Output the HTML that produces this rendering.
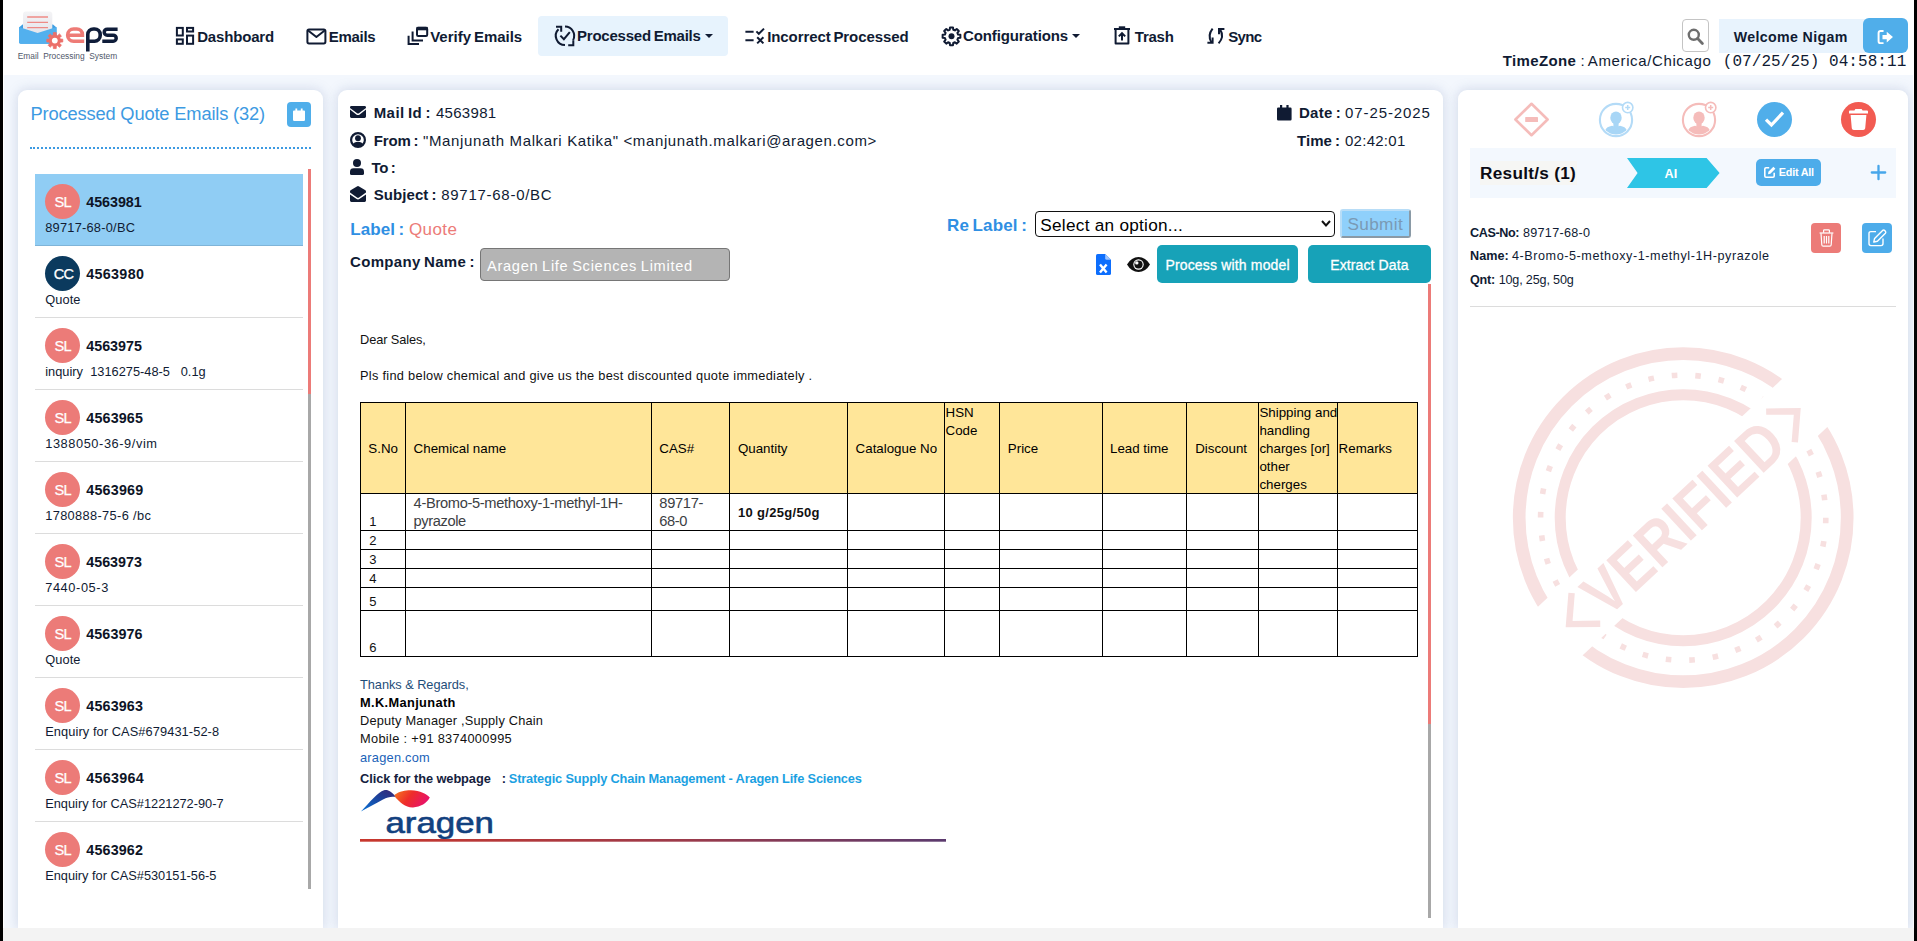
<!DOCTYPE html>
<html lang="en">
<head>
<meta charset="utf-8">
<title>EPS - Email Processing System</title>
<style>
*{box-sizing:border-box}
html,body{margin:0;padding:0}
body{width:1917px;height:941px;overflow:hidden;position:relative;background:#fff;font-family:"Liberation Sans",sans-serif;color:#101b33}
.t{position:absolute;white-space:pre;line-height:1;color:#101b33;font-family:"Liberation Sans",sans-serif}
.abs{position:absolute}
.edgeL{left:0;top:0;width:3px;height:941px;background:#000}
.edgeR{left:1914px;top:0;width:3px;height:941px;background:#000}
.bg{left:4px;top:75px;width:1909px;height:853px;background:#f3f7fd}
.foot{left:3px;top:928px;width:1911px;height:13px;background:#f3f3f3;z-index:5}
.card{background:#fff;border-radius:9px 9px 0 0;box-shadow:0 0 11px 1px rgba(125,145,185,.27)}
svg{position:absolute;overflow:visible}
</style>
</head>
<body>
<div class="abs edgeL"></div>
<div class="abs edgeR"></div>
<div class="abs bg"></div>
<div class="abs foot"></div>

<header>
<div class="abs" style="left:4px;top:0;width:1909px;height:75px;background:#fff"></div>
<svg style="left:0px;top:0px" width="130" height="75" viewBox="0 0 130 75" >
<defs><linearGradient id="lgp" x1="0" y1="0" x2="0" y2="1"><stop offset="0" stop-color="#f4f4f6"/><stop offset="1" stop-color="#e4e4ea"/></linearGradient></defs>
<path d="M19 27.5 L22.5 24.5 H53 L56.5 27.5 V42 Q56.5 43.8 54.7 43.8 H20.8 Q19 43.8 19 42 Z" fill="#3f9fe3"/>
<rect x="23" y="11.5" width="29.3" height="23" rx="3" fill="url(#lgp)"/>
<path d="M27.2 17 H48 M27.2 22.3 H48 M27.2 27.6 H48" stroke="#ee8a86" stroke-width="1.3"/>
<path d="M19 27 L37.6 33 L56.5 27 V42 Q56.5 43.8 54.7 43.8 H20.8 Q19 43.8 19 42 Z" fill="#52b0ee"/>
<g transform="translate(54.8 40.6)"><path d="M-1.48 -5.51 L-1.41 -7.98 L1.41 -7.98 L1.48 -5.51 L2.85 -4.94 L4.65 -6.64 L6.64 -4.65 L4.94 -2.85 L5.51 -1.48 L7.98 -1.41 L7.98 1.41 L5.51 1.48 L4.94 2.85 L6.64 4.65 L4.65 6.64 L2.85 4.94 L1.48 5.51 L1.41 7.98 L-1.41 7.98 L-1.48 5.51 L-2.85 4.94 L-4.65 6.64 L-6.64 4.65 L-4.94 2.85 L-5.51 1.48 L-7.98 1.41 L-7.98 -1.41 L-5.51 -1.48 L-4.94 -2.85 L-6.64 -4.65 L-4.65 -6.64 L-2.85 -4.94 Z" fill="#ec6f69" stroke="#ec6f69" stroke-width=".8" stroke-linejoin="round"/><circle r="2.9" fill="#fff"/></g>
<path d="M68.3 35.3 H82.4 V34.6 A5.6 5.6 0 0 0 76.8 29 H73.6 A5.9 5.9 0 0 0 67.7 34.9 V35.4 A5.9 5.9 0 0 0 73.6 41.2 H84.2" fill="none" stroke="#ee7b76" stroke-width="3.6"/>
<path d="M87.8 51.4 V34.6 A5.6 5.6 0 0 1 93.4 29 H94.6 A5.6 5.6 0 0 1 100.2 34.6 V35.6 A5.6 5.6 0 0 1 94.6 41.2 H87.8" fill="none" stroke="#0f1d3a" stroke-width="3.6"/>
<path d="M117.6 29.2 H107.2 A3 3 0 0 0 107.2 35.2 H113.2 A3 3 0 0 1 113.2 41.2 H102.3" fill="none" stroke="#0f1d3a" stroke-width="3.5"/>
</svg>
<span class="t" style="left:17.7px;top:52.0px;font-size:8.4px;color:#50586a;letter-spacing:-0.004px;">Email  Processing  System</span>
<nav>
<div class="abs" style="left:538px;top:16px;width:190px;height:39.5px;border-radius:4px;background:#e7f3fd"></div>
<svg style="left:176px;top:27px" width="18" height="18" viewBox="0 0 18 18" ><g fill="none" stroke="#101b33" stroke-width="2"><rect x=".9" y=".9" width="5.9" height="7.6"/><rect x="11" y=".9" width="6.1" height="3.6"/><rect x=".9" y="12.4" width="5.9" height="4.4"/><rect x="11" y="8.6" width="6.1" height="8.2"/></g></svg>
<svg style="left:306px;top:27.5px" width="21" height="17" viewBox="0 0 21 17" ><g fill="none" stroke="#101b33" stroke-width="2" stroke-linejoin="round"><rect x="1.4" y="1.4" width="18" height="14" rx="1.6"/><path d="M1.8 2.2 L10.4 9 L19 2.2"/></g></svg>
<svg style="left:407px;top:26px" width="22" height="19" viewBox="0 0 22 19" ><g fill="none" stroke="#101b33" stroke-width="2"><rect x="10" y="1.8" width="10.2" height="8.2" rx="1.2"/><path d="M9.6 2.6 H20.6" stroke-width="3.4"/><path d="M5.6 5.6 V14.4 H16"/><path d="M1.6 9.8 V18 H12"/></g></svg>
<svg style="left:554px;top:25px" width="22" height="22" viewBox="0 0 22 22" ><g fill="none" stroke="#101b33" stroke-width="2" stroke-linejoin="miter"><path d="M11 20 A9.2 9.2 0 0 1 4.5 4.3"/><path d="M2 1.7 H7.2 V6.8"/><path d="M11 1.6 A9.2 9.2 0 0 1 19.1 15.1"/><path d="M19.3 15.2 V20.2 H14.2"/><path d="M6.4 10.6 L9.9 14.2 L15.8 7.2"/></g></svg>
<svg style="left:745px;top:27px" width="21" height="18" viewBox="0 0 21 18" ><g fill="none" stroke="#101b33" stroke-width="2"><path d="M.4 4.8 H8.6 M.4 13.2 H8.6"/><path d="M11.4 4.4 L13.8 6.8 L19 1.6"/><path d="M12.2 10.2 L18.4 16.4 M18.4 10.2 L12.2 16.4"/></g></svg>
<svg style="left:940.5px;top:25.5px" width="21" height="21" viewBox="0 0 21 21" ><g transform="translate(10.5 10.3)"><path d="M-1.76 -6.57 L-1.49 -8.88 L1.49 -8.88 L1.76 -6.57 L3.40 -5.89 L5.23 -7.33 L7.33 -5.23 L5.89 -3.40 L6.57 -1.76 L8.88 -1.49 L8.88 1.49 L6.57 1.76 L5.89 3.40 L7.33 5.23 L5.23 7.33 L3.40 5.89 L1.76 6.57 L1.49 8.88 L-1.49 8.88 L-1.76 6.57 L-3.40 5.89 L-5.23 7.33 L-7.33 5.23 L-5.89 3.40 L-6.57 1.76 L-8.88 1.49 L-8.88 -1.49 L-6.57 -1.76 L-5.89 -3.40 L-7.33 -5.23 L-5.23 -7.33 L-3.40 -5.89 Z" fill="none" stroke="#101b33" stroke-width="2" stroke-linejoin="round" stroke-width="1.7"/><circle r="3" fill="#101b33"/></g></svg>
<svg style="left:1113px;top:26px" width="18" height="20" viewBox="0 0 18 20" ><g fill="none" stroke="#101b33" stroke-width="2"><path d="M1 3 H17"/><path d="M5.8 1.4 H12.2" stroke-width="2.2"/><path d="M2.6 3 V17.6 H15.4 V3" stroke-linejoin="round"/><path d="M9 14.6 V7.4 M5.8 10.4 L9 7.2 L12.2 10.4"/></g></svg>
<svg style="left:1206px;top:27px" width="20" height="18" viewBox="0 0 20 18" ><g fill="none" stroke="#101b33" stroke-width="2" stroke-width="2"><path d="M6.6 1.6 Q1.2 8.4 5.4 15.2"/><path d="M1.4 15.8 H6.6 V10.6"/><path d="M12.6 16.4 Q18.6 9.6 14.2 2.6"/><path d="M18.4 2 H13 V7.2"/></g></svg>
<svg style="left:704.6px;top:34px" width="8" height="4" viewBox="0 0 8 4" ><path d="M0 0 H8 L4 4 Z" fill="#101b33"/></svg>
<svg style="left:1072.3px;top:34px" width="8" height="4" viewBox="0 0 8 4" ><path d="M0 0 H8 L4 4 Z" fill="#101b33"/></svg>
<a class="t" style="left:197.2px;top:29.0px;font-size:15px;font-weight:700;word-spacing:-1.2px;letter-spacing:-0.173px;">Dashboard</a>
<a class="t" style="left:328.8px;top:29.0px;font-size:15px;font-weight:700;word-spacing:-1.2px;letter-spacing:-0.296px;">Emails</a>
<a class="t" style="left:430.2px;top:29.0px;font-size:15px;font-weight:700;word-spacing:-1.2px;letter-spacing:-0.016px;">Verify Emails</a>
<a class="t" style="left:577.0px;top:28.0px;font-size:15px;font-weight:700;word-spacing:-1.2px;letter-spacing:-0.220px;">Processed Emails</a>
<a class="t" style="left:767.2px;top:29.0px;font-size:15px;font-weight:700;word-spacing:-1.2px;letter-spacing:-0.092px;">Incorrect Processed</a>
<a class="t" style="left:963.0px;top:28.0px;font-size:15px;font-weight:700;word-spacing:-1.2px;letter-spacing:-0.118px;">Configurations</a>
<a class="t" style="left:1134.8px;top:29.0px;font-size:15px;font-weight:700;word-spacing:-1.2px;letter-spacing:-0.246px;">Trash</a>
<a class="t" style="left:1228.3px;top:29.0px;font-size:15px;font-weight:700;word-spacing:-1.2px;letter-spacing:-0.715px;">Sync</a>
</nav>
<div class="abs" style="left:1682px;top:19px;width:27px;height:33px;border:1px solid #c4c4c4;border-radius:4px;background:#fff"></div>
<svg style="left:1687px;top:28px" width="17" height="17" viewBox="0 0 17 17" ><circle cx="6.8" cy="6.8" r="5" fill="none" stroke="#6e6e6e" stroke-width="2.4"/><path d="M10.6 10.6 L15.4 15.4" stroke="#6e6e6e" stroke-width="2.8" stroke-linecap="round"/></svg>
<div class="abs" style="left:1719px;top:19px;width:150px;height:34px;background:#e8f3fd"></div>
<div class="abs" style="left:1863px;top:18px;width:45px;height:35px;border-radius:6px;background:#50aeea"></div>
<svg style="left:1877px;top:30px" width="17" height="14.2" viewBox="0 0 18 16" ><path d="M6 1.2 H3.4 Q1.2 1.2 1.2 3.4 V12.6 Q1.2 14.8 3.4 14.8 H6" fill="none" stroke="#fff" stroke-width="2.2" stroke-linecap="round"/><path d="M5.6 5.6 H10.4 V2 L17.4 8 L10.4 14 V10.4 H5.6 Z" fill="#fff"/></svg>
<span class="t" style="left:1733.7px;top:30.0px;font-size:14.2px;font-weight:700;letter-spacing:0.358px;">Welcome Nigam</span>
<span class="t" style="left:1502.8px;top:53.0px;font-size:15px;font-weight:700;letter-spacing:0.353px;">TimeZone</span>
<span class="t" style="left:1580.6px;top:53.0px;font-size:15px;">:</span><span class="t" style="left:1587.8px;top:53.0px;font-size:15px;letter-spacing:0.625px;">America/Chicago</span>
<span class="t" style="left:1722.8px;top:54.0px;font-size:16px;font-family:'Liberation Mono', monospace;letter-spacing:0.056px;">(07/25/25) 04:58:11</span>
</header>

<aside>
<div class="abs card" style="left:18px;top:90px;width:305px;height:838px"></div>
<h2 class="t" style="left:30.5px;top:105.0px;font-size:18.3px;color:#3d9ae2;letter-spacing:-0.159px;margin:0;font-weight:400;">Processed Quote Emails (32)</h2>
<div class="abs" style="left:287px;top:102px;width:24px;height:25px;border-radius:4px;background:#4faeea"></div>
<svg style="left:293px;top:108px" width="12" height="13" viewBox="0 0 12 13" ><path d="M1 2.6 H11 Q12 2.6 12 3.6 V11.8 Q12 13 10.8 13 H1.2 Q0 13 0 11.8 V3.6 Q0 2.6 1 2.6 Z M2.4 .4 H4.2 V2.8 H2.4 Z M7.8 .4 H9.6 V2.8 H7.8 Z" fill="#fff"/></svg>
<div class="abs" style="left:30px;top:147px;width:281px;height:0;border-top:2.4px dotted #3d9ae2"></div>
<div class="abs" style="left:308px;top:169px;width:3px;height:225px;background:#ec7b78"></div>
<div class="abs" style="left:308px;top:394px;width:3px;height:495px;background:#a8a8a8"></div>
<ul style="list-style:none;margin:0;padding:0">
<li><div class="abs" style="left:35px;top:174px;width:268px;height:72px;background:#90cdf4;border-bottom:1px solid #7fb4d8"></div>
<div class="abs" style="left:45px;top:184px;width:35px;height:35px;border-radius:50%;background:#ec7b78"></div>
<span class="t" style="left:54.4px;top:195.0px;font-size:14.6px;color:#fff;letter-spacing:-0.580px;-webkit-text-stroke:.25px #fff;">SL</span><span class="t" style="left:86.3px;top:195.0px;font-size:14.3px;font-weight:700;color:#0d1426;letter-spacing:-0.039px;">4563981</span><span class="t" style="left:45.2px;top:222.0px;font-size:12.8px;letter-spacing:0.246px;">89717-68-0/BC</span></li>
<li><div class="abs" style="left:35px;top:246px;width:268px;height:72px;background:transparent;border-bottom:1px solid #dcdcdc"></div>
<div class="abs" style="left:45px;top:256px;width:35px;height:35px;border-radius:50%;background:#0b3a5e"></div>
<span class="t" style="left:53.7px;top:267.0px;font-size:14.6px;color:#fff;letter-spacing:-0.847px;-webkit-text-stroke:.25px #fff;">CC</span><span class="t" style="left:86.3px;top:267.0px;font-size:14.3px;font-weight:700;color:#0d1426;letter-spacing:0.318px;">4563980</span><span class="t" style="left:45.2px;top:294.0px;font-size:12.8px;letter-spacing:0.085px;">Quote</span></li>
<li><div class="abs" style="left:35px;top:318px;width:268px;height:72px;background:transparent;border-bottom:1px solid #dcdcdc"></div>
<div class="abs" style="left:45px;top:328px;width:35px;height:35px;border-radius:50%;background:#ec7b78"></div>
<span class="t" style="left:54.4px;top:339.0px;font-size:14.6px;color:#fff;letter-spacing:-0.580px;-webkit-text-stroke:.25px #fff;">SL</span><span class="t" style="left:86.3px;top:339.0px;font-size:14.3px;font-weight:700;color:#0d1426;letter-spacing:-0.010px;">4563975</span><span class="t" style="left:45.2px;top:366.0px;font-size:12.8px;letter-spacing:0.015px;">inquiry  1316275-48-5   0.1g</span></li>
<li><div class="abs" style="left:35px;top:390px;width:268px;height:72px;background:transparent;border-bottom:1px solid #dcdcdc"></div>
<div class="abs" style="left:45px;top:400px;width:35px;height:35px;border-radius:50%;background:#ec7b78"></div>
<span class="t" style="left:54.4px;top:411.0px;font-size:14.6px;color:#fff;letter-spacing:-0.580px;-webkit-text-stroke:.25px #fff;">SL</span><span class="t" style="left:86.3px;top:411.0px;font-size:14.3px;font-weight:700;color:#0d1426;letter-spacing:0.161px;">4563965</span><span class="t" style="left:45.2px;top:438.0px;font-size:12.8px;letter-spacing:0.578px;">1388050-36-9/vim</span></li>
<li><div class="abs" style="left:35px;top:462px;width:268px;height:72px;background:transparent;border-bottom:1px solid #dcdcdc"></div>
<div class="abs" style="left:45px;top:472px;width:35px;height:35px;border-radius:50%;background:#ec7b78"></div>
<span class="t" style="left:54.4px;top:483.0px;font-size:14.6px;color:#fff;letter-spacing:-0.580px;-webkit-text-stroke:.25px #fff;">SL</span><span class="t" style="left:86.3px;top:483.0px;font-size:14.3px;font-weight:700;color:#0d1426;letter-spacing:0.204px;">4563969</span><span class="t" style="left:45.2px;top:510.0px;font-size:12.8px;letter-spacing:0.354px;">1780888-75-6 /bc</span></li>
<li><div class="abs" style="left:35px;top:534px;width:268px;height:72px;background:transparent;border-bottom:1px solid #dcdcdc"></div>
<div class="abs" style="left:45px;top:544px;width:35px;height:35px;border-radius:50%;background:#ec7b78"></div>
<span class="t" style="left:54.4px;top:555.0px;font-size:14.6px;color:#fff;letter-spacing:-0.580px;-webkit-text-stroke:.25px #fff;">SL</span><span class="t" style="left:86.3px;top:555.0px;font-size:14.3px;font-weight:700;color:#0d1426;letter-spacing:-0.010px;">4563973</span><span class="t" style="left:45.2px;top:582.0px;font-size:12.8px;letter-spacing:0.595px;">7440-05-3</span></li>
<li><div class="abs" style="left:35px;top:606px;width:268px;height:72px;background:transparent;border-bottom:1px solid #dcdcdc"></div>
<div class="abs" style="left:45px;top:616px;width:35px;height:35px;border-radius:50%;background:#ec7b78"></div>
<span class="t" style="left:54.4px;top:627.0px;font-size:14.6px;color:#fff;letter-spacing:-0.580px;-webkit-text-stroke:.25px #fff;">SL</span><span class="t" style="left:86.3px;top:627.0px;font-size:14.3px;font-weight:700;color:#0d1426;letter-spacing:0.075px;">4563976</span><span class="t" style="left:45.2px;top:654.0px;font-size:12.8px;letter-spacing:0.085px;">Quote</span></li>
<li><div class="abs" style="left:35px;top:678px;width:268px;height:72px;background:transparent;border-bottom:1px solid #dcdcdc"></div>
<div class="abs" style="left:45px;top:688px;width:35px;height:35px;border-radius:50%;background:#ec7b78"></div>
<span class="t" style="left:54.4px;top:699.0px;font-size:14.6px;color:#fff;letter-spacing:-0.580px;-webkit-text-stroke:.25px #fff;">SL</span><span class="t" style="left:86.3px;top:699.0px;font-size:14.3px;font-weight:700;color:#0d1426;letter-spacing:0.161px;">4563963</span><span class="t" style="left:45.2px;top:726.0px;font-size:12.8px;letter-spacing:0.094px;">Enquiry for CAS#679431-52-8</span></li>
<li><div class="abs" style="left:35px;top:750px;width:268px;height:72px;background:transparent;border-bottom:1px solid #dcdcdc"></div>
<div class="abs" style="left:45px;top:760px;width:35px;height:35px;border-radius:50%;background:#ec7b78"></div>
<span class="t" style="left:54.4px;top:771.0px;font-size:14.6px;color:#fff;letter-spacing:-0.580px;-webkit-text-stroke:.25px #fff;">SL</span><span class="t" style="left:86.3px;top:771.0px;font-size:14.3px;font-weight:700;color:#0d1426;letter-spacing:0.275px;">4563964</span><span class="t" style="left:45.2px;top:798.0px;font-size:12.8px;letter-spacing:-0.006px;">Enquiry for CAS#1221272-90-7</span></li>
<li><div class="abs" style="left:35px;top:822px;width:268px;height:72px;background:transparent;border-bottom:1px solid transparent"></div>
<div class="abs" style="left:45px;top:832px;width:35px;height:35px;border-radius:50%;background:#ec7b78"></div>
<span class="t" style="left:54.4px;top:843.0px;font-size:14.6px;color:#fff;letter-spacing:-0.580px;-webkit-text-stroke:.25px #fff;">SL</span><span class="t" style="left:86.3px;top:843.0px;font-size:14.3px;font-weight:700;color:#0d1426;letter-spacing:0.161px;">4563962</span><span class="t" style="left:45.2px;top:870.0px;font-size:12.8px;letter-spacing:-0.009px;">Enquiry for CAS#530151-56-5</span></li>
</ul>
</aside>

<main>
<div class="abs card" style="left:338px;top:90px;width:1105px;height:838px"></div>
<svg style="left:350px;top:106px" width="16" height="12" viewBox="0 0 16 12" ><path d="M1.4 0 H14.6 Q16 0 16 1.4 V1.9 L8.9 7.3 Q8 7.9 7.1 7.3 L0 1.9 V1.4 Q0 0 1.4 0 Z M0 3.6 L6.3 8.4 Q8 9.6 9.7 8.4 L16 3.6 V10.6 Q16 12 14.6 12 H1.4 Q0 12 0 10.6 Z" fill="#101b33"/></svg>
<svg style="left:350px;top:132px" width="16" height="16" viewBox="0 0 16 16" ><circle cx="8" cy="8" r="6.9" fill="none" stroke="#101b33" stroke-width="2.2"/><circle cx="8" cy="6.2" r="2.9" fill="#101b33"/><path d="M2.6 12.8 Q4 9.7 8 9.7 Q12 9.7 13.4 12.8 Q11 15 8 15 Q5 15 2.6 12.8 Z" fill="#101b33"/></svg>
<svg style="left:350px;top:159px" width="14" height="16" viewBox="0 0 14 16" ><circle cx="7" cy="4" r="4" fill="#101b33"/><path d="M0 14.4 V12.6 Q0 9.2 3.6 9.2 H10.4 Q14 9.2 14 12.6 V14.4 Q14 16 12.4 16 H1.6 Q0 16 0 14.4 Z" fill="#101b33"/></svg>
<svg style="left:350px;top:186px" width="16" height="16" viewBox="0 0 16 16" ><path d="M0 5.6 Q0 4.8 .6 4.3 L6.9 .4 Q8 -.3 9.1 .4 L15.4 4.3 Q16 4.8 16 5.6 V6.6 L9 11.6 Q8 12.3 7 11.6 L0 6.6 Z M0 8.4 L6.3 12.8 Q8 14 9.7 12.8 L16 8.4 V14.6 Q16 16 14.6 16 H1.4 Q0 16 0 14.6 Z" fill="#101b33"/></svg>
<span class="t" style="left:373.7px;top:105.0px;font-size:15px;font-weight:700;word-spacing:-1.2px;letter-spacing:0.429px;">Mail Id :</span><span class="t" style="left:435.9px;top:105.0px;font-size:15px;letter-spacing:0.313px;">4563981</span>
<span class="t" style="left:373.7px;top:133.0px;font-size:15px;font-weight:700;word-spacing:-1.2px;letter-spacing:-0.145px;">From :</span><span class="t" style="left:423.0px;top:133.0px;font-size:15px;letter-spacing:0.636px;">&quot;Manjunath Malkari Katika&quot; &lt;manjunath.malkari@aragen.com&gt;</span>
<span class="t" style="left:371.6px;top:160.0px;font-size:15px;font-weight:700;word-spacing:-1.2px;letter-spacing:-0.347px;">To :</span>
<span class="t" style="left:373.7px;top:187.0px;font-size:15px;font-weight:700;word-spacing:-1.2px;letter-spacing:0.073px;">Subject :</span><span class="t" style="left:441.2px;top:187.0px;font-size:15px;letter-spacing:0.728px;">89717-68-0/BC</span>
<span class="t" style="left:350.2px;top:221.0px;font-size:17px;font-weight:700;color:#2f8fe3;word-spacing:-1.4px;letter-spacing:0.101px;">Label :</span><span class="t" style="left:409.0px;top:221.0px;font-size:17px;color:#ec7b78;letter-spacing:0.397px;">Quote</span>
<span class="t" style="left:350.0px;top:254.0px;font-size:15px;font-weight:700;word-spacing:-1.2px;letter-spacing:0.333px;">Company Name :</span>
<div class="abs" style="left:480px;top:248px;width:250px;height:33px;border:1px solid #767676;border-radius:4px;background:#b4b4b4"></div>
<span class="t" style="left:487.0px;top:259.0px;font-size:14.6px;color:#fff;word-spacing:-1px;letter-spacing:0.707px;">Aragen Life Sciences Limited</span>
<svg style="left:1277px;top:104.5px" width="14.6" height="15.5" viewBox="0 0 14.6 15.5" ><path d="M1.2 2.6 H13.4 Q14.6 2.6 14.6 3.8 V14.2 Q14.6 15.5 13.4 15.5 H1.2 Q0 15.5 0 14.2 V3.8 Q0 2.6 1.2 2.6 Z M3 0 H5.2 V2.8 H3 Z M9.4 0 H11.6 V2.8 H9.4 Z" fill="#101b33"/></svg>
<span class="t" style="left:1299.0px;top:105.0px;font-size:15px;font-weight:700;word-spacing:-1.2px;letter-spacing:0.253px;">Date :</span><span class="t" style="left:1345.0px;top:105.0px;font-size:15px;letter-spacing:0.907px;">07-25-2025</span>
<span class="t" style="left:1297.0px;top:133.0px;font-size:15px;font-weight:700;word-spacing:-1.2px;letter-spacing:0.049px;">Time :</span><span class="t" style="left:1345.0px;top:133.0px;font-size:15px;letter-spacing:0.264px;">02:42:01</span>
<span class="t" style="left:947.0px;top:217.0px;font-size:17px;font-weight:700;color:#2f8fe3;word-spacing:-1.4px;letter-spacing:0.155px;">Re Label :</span>
<div class="abs" style="left:1035px;top:211px;width:300px;height:26px;border:1.5px solid #111;border-radius:4px;background:#fff"></div>
<span class="t" style="left:1040.3px;top:217.0px;font-size:17.2px;color:#000;letter-spacing:0.269px;">Select an option...</span>
<svg style="left:1321px;top:220px" width="10" height="7" viewBox="0 0 10 7" ><path d="M1 1 L5 5.4 L9 1" fill="none" stroke="#111" stroke-width="2"/></svg>
<div class="abs" style="left:1340px;top:209px;width:71px;height:29px;border:2px solid;border-color:#b8ddf7 #8a9aa6 #8a9aa6 #b8ddf7;border-radius:3px;background:#8fd0fb"></div>
<span class="t" style="left:1347.5px;top:216.0px;font-size:17.2px;color:#7a9ab5;letter-spacing:0.333px;">Submit</span>
<svg style="left:1096px;top:254px" width="15" height="21" viewBox="0 0 15 21" ><path d="M1.6 0 H9.2 L15 5.8 V19.4 Q15 21 13.4 21 H1.6 Q0 21 0 19.4 V1.6 Q0 0 1.6 0 Z" fill="#0d6efd"/><path d="M9.2 0 V4.4 Q9.2 5.8 10.6 5.8 H15 Z" fill="#9ec5fe"/><path d="M4 10.6 L10.6 18.6 M10.6 10.6 L4 18.6" stroke="#fff" stroke-width="2.4"/></svg>
<svg style="left:1126.6px;top:257px" width="23" height="15" viewBox="0 0 23 15" ><path d="M11.5 0 Q18.6 0 23 7.5 Q18.6 15 11.5 15 Q4.4 15 0 7.5 Q4.4 0 11.5 0 Z" fill="#111"/><circle cx="11.5" cy="7.5" r="5.2" fill="#fff"/><circle cx="11.5" cy="7.5" r="4.1" fill="#111"/><circle cx="9.8" cy="5.9" r="1.7" fill="#fff"/></svg>
<div class="abs" style="left:1157px;top:245px;width:141px;height:38px;border-radius:5px;background:#17a2b8"></div>
<span class="t" style="left:1165.4px;top:258.0px;font-size:14px;color:#fff;letter-spacing:0.167px;-webkit-text-stroke:.3px #fff;">Process with model</span>
<div class="abs" style="left:1308px;top:245px;width:123px;height:38px;border-radius:5px;background:#17a2b8"></div>
<span class="t" style="left:1330.3px;top:258.0px;font-size:14px;color:#fff;letter-spacing:0.106px;-webkit-text-stroke:.3px #fff;">Extract Data</span>
<div class="abs" style="left:1428px;top:284px;width:3px;height:440px;background:#ec7b78"></div>
<div class="abs" style="left:1428px;top:724px;width:3px;height:194px;background:#a8a8a8"></div>
</main>

<article>
<p class="t" style="left:360.0px;top:334.0px;font-size:12.8px;color:#111;letter-spacing:-0.105px;margin:0;">Dear Sales,</p>
<p class="t" style="left:360.0px;top:370.0px;font-size:12.8px;color:#111;letter-spacing:0.284px;margin:0;">Pls find below chemical and give us the best discounted quote immediately .</p>
<table class="abs" style="left:360px;top:402px;width:1058px;height:255px;border-collapse:collapse;table-layout:fixed"><colgroup><col style="width:45px"><col style="width:246px"><col style="width:78px"><col style="width:118px"><col style="width:97px"><col style="width:55px"><col style="width:103px"><col style="width:84px"><col style="width:72px"><col style="width:79px"><col style="width:80px"></colgroup>
<tr style="height:91px"><td style="border:1px solid #000;padding:0;background:#ffe699;"></td><td style="border:1px solid #000;padding:0;background:#ffe699;"></td><td style="border:1px solid #000;padding:0;background:#ffe699;"></td><td style="border:1px solid #000;padding:0;background:#ffe699;"></td><td style="border:1px solid #000;padding:0;background:#ffe699;"></td><td style="border:1px solid #000;padding:0;background:#ffe699;"></td><td style="border:1px solid #000;padding:0;background:#ffe699;"></td><td style="border:1px solid #000;padding:0;background:#ffe699;"></td><td style="border:1px solid #000;padding:0;background:#ffe699;"></td><td style="border:1px solid #000;padding:0;background:#ffe699;"></td><td style="border:1px solid #000;padding:0;background:#ffe699;"></td></tr>
<tr style="height:37px"><td style="border:1px solid #000;padding:0;"></td><td style="border:1px solid #000;padding:0;"></td><td style="border:1px solid #000;padding:0;"></td><td style="border:1px solid #000;padding:0;"></td><td style="border:1px solid #000;padding:0;"></td><td style="border:1px solid #000;padding:0;"></td><td style="border:1px solid #000;padding:0;"></td><td style="border:1px solid #000;padding:0;"></td><td style="border:1px solid #000;padding:0;"></td><td style="border:1px solid #000;padding:0;"></td><td style="border:1px solid #000;padding:0;"></td></tr>
<tr style="height:19px"><td style="border:1px solid #000;padding:0;"></td><td style="border:1px solid #000;padding:0;"></td><td style="border:1px solid #000;padding:0;"></td><td style="border:1px solid #000;padding:0;"></td><td style="border:1px solid #000;padding:0;"></td><td style="border:1px solid #000;padding:0;"></td><td style="border:1px solid #000;padding:0;"></td><td style="border:1px solid #000;padding:0;"></td><td style="border:1px solid #000;padding:0;"></td><td style="border:1px solid #000;padding:0;"></td><td style="border:1px solid #000;padding:0;"></td></tr>
<tr style="height:19px"><td style="border:1px solid #000;padding:0;"></td><td style="border:1px solid #000;padding:0;"></td><td style="border:1px solid #000;padding:0;"></td><td style="border:1px solid #000;padding:0;"></td><td style="border:1px solid #000;padding:0;"></td><td style="border:1px solid #000;padding:0;"></td><td style="border:1px solid #000;padding:0;"></td><td style="border:1px solid #000;padding:0;"></td><td style="border:1px solid #000;padding:0;"></td><td style="border:1px solid #000;padding:0;"></td><td style="border:1px solid #000;padding:0;"></td></tr>
<tr style="height:19px"><td style="border:1px solid #000;padding:0;"></td><td style="border:1px solid #000;padding:0;"></td><td style="border:1px solid #000;padding:0;"></td><td style="border:1px solid #000;padding:0;"></td><td style="border:1px solid #000;padding:0;"></td><td style="border:1px solid #000;padding:0;"></td><td style="border:1px solid #000;padding:0;"></td><td style="border:1px solid #000;padding:0;"></td><td style="border:1px solid #000;padding:0;"></td><td style="border:1px solid #000;padding:0;"></td><td style="border:1px solid #000;padding:0;"></td></tr>
<tr style="height:23px"><td style="border:1px solid #000;padding:0;"></td><td style="border:1px solid #000;padding:0;"></td><td style="border:1px solid #000;padding:0;"></td><td style="border:1px solid #000;padding:0;"></td><td style="border:1px solid #000;padding:0;"></td><td style="border:1px solid #000;padding:0;"></td><td style="border:1px solid #000;padding:0;"></td><td style="border:1px solid #000;padding:0;"></td><td style="border:1px solid #000;padding:0;"></td><td style="border:1px solid #000;padding:0;"></td><td style="border:1px solid #000;padding:0;"></td></tr>
<tr style="height:46px"><td style="border:1px solid #000;padding:0;"></td><td style="border:1px solid #000;padding:0;"></td><td style="border:1px solid #000;padding:0;"></td><td style="border:1px solid #000;padding:0;"></td><td style="border:1px solid #000;padding:0;"></td><td style="border:1px solid #000;padding:0;"></td><td style="border:1px solid #000;padding:0;"></td><td style="border:1px solid #000;padding:0;"></td><td style="border:1px solid #000;padding:0;"></td><td style="border:1px solid #000;padding:0;"></td><td style="border:1px solid #000;padding:0;"></td></tr>
</table>
<span class="t" style="left:368.3px;top:442.0px;font-size:13.33px;color:#000;">S.No</span><span class="t" style="left:413.6px;top:442.0px;font-size:13.33px;color:#000;">Chemical name</span><span class="t" style="left:659.3px;top:442.0px;font-size:13.33px;color:#000;">CAS#</span><span class="t" style="left:737.9px;top:442.0px;font-size:13.33px;color:#000;">Quantity</span><span class="t" style="left:855.6px;top:442.0px;font-size:13.33px;color:#000;">Catalogue No</span><span class="t" style="left:945.5px;top:406.0px;font-size:13.33px;color:#000;">HSN</span><span class="t" style="left:945.5px;top:424.0px;font-size:13.33px;color:#000;">Code</span><span class="t" style="left:1007.8px;top:442.0px;font-size:13.33px;color:#000;">Price</span><span class="t" style="left:1110.0px;top:442.0px;font-size:13.33px;color:#000;">Lead time</span><span class="t" style="left:1195.2px;top:442.0px;font-size:13.33px;color:#000;">Discount</span><span class="t" style="left:1259.4px;top:406.0px;font-size:13.33px;color:#000;">Shipping and</span><span class="t" style="left:1259.4px;top:424.0px;font-size:13.33px;color:#000;">handling</span><span class="t" style="left:1259.4px;top:442.0px;font-size:13.33px;color:#000;">charges [or]</span><span class="t" style="left:1259.4px;top:460.0px;font-size:13.33px;color:#000;">other</span><span class="t" style="left:1259.4px;top:478.0px;font-size:13.33px;color:#000;">cherges</span><span class="t" style="left:1338.6px;top:442.0px;font-size:13.33px;color:#000;">Remarks</span>
<span class="t" style="left:413.6px;top:496.0px;font-size:14.67px;color:#3c4043;letter-spacing:-0.336px;">4-Bromo-5-methoxy-1-methyl-1H-</span><span class="t" style="left:413.6px;top:514.0px;font-size:14.67px;color:#3c4043;letter-spacing:-0.401px;">pyrazole</span><span class="t" style="left:659.3px;top:496.0px;font-size:14.67px;color:#3c4043;letter-spacing:-0.307px;">89717-</span><span class="t" style="left:659.3px;top:514.0px;font-size:14.67px;color:#3c4043;letter-spacing:-0.411px;">68-0</span><span class="t" style="left:737.9px;top:506.0px;font-size:13px;font-weight:700;color:#111;letter-spacing:0.329px;">10 g/25g/50g</span>
<span class="t" style="left:369.2px;top:515.0px;font-size:13px;color:#111;">1</span><span class="t" style="left:369.2px;top:534.0px;font-size:13px;color:#111;">2</span><span class="t" style="left:369.2px;top:553.0px;font-size:13px;color:#111;">3</span><span class="t" style="left:369.2px;top:572.0px;font-size:13px;color:#111;">4</span><span class="t" style="left:369.2px;top:595.0px;font-size:13px;color:#111;">5</span><span class="t" style="left:369.2px;top:641.0px;font-size:13px;color:#111;">6</span>
<span class="t" style="left:360.0px;top:679.0px;font-size:12.8px;color:#1f4e79;letter-spacing:-0.050px;">Thanks &amp; Regards,</span>
<span class="t" style="left:360.0px;top:697.0px;font-size:12.8px;font-weight:700;color:#000;letter-spacing:0.369px;">M.K.Manjunath</span>
<span class="t" style="left:360.0px;top:715.0px;font-size:12.8px;color:#111;letter-spacing:0.188px;">Deputy Manager ,Supply Chain</span>
<span class="t" style="left:360.0px;top:733.0px;font-size:12.8px;color:#111;letter-spacing:0.313px;">Mobile : +91 8374000995</span>
<a class="t" style="left:360.0px;top:752.0px;font-size:12.8px;color:#1a62b8;letter-spacing:0.232px;">aragen.com</a>
<span class="t" style="left:360.0px;top:773.0px;font-size:12.8px;font-weight:700;color:#14213d;letter-spacing:-0.075px;">Click for the webpage</span><span class="t" style="left:501.7px;top:773.0px;font-size:12.8px;font-weight:700;color:#14213d;">:</span><a class="t" style="left:508.8px;top:773.0px;font-size:12.8px;font-weight:700;color:#1ba1e2;letter-spacing:-0.166px;">Strategic Supply Chain Management - Aragen Life Sciences</a>
<svg style="left:360px;top:789px" width="586" height="54" viewBox="0 0 586 54" ><defs><linearGradient id="swb" x1="0" y1="1" x2="1" y2="0"><stop offset="0" stop-color="#0a74d8"/><stop offset=".6" stop-color="#1d3f98"/><stop offset="1" stop-color="#3a2472"/></linearGradient>
<linearGradient id="swr" x1="0" y1="0" x2="1" y2=".35"><stop offset="0" stop-color="#f57a1f"/><stop offset=".5" stop-color="#ee2d2a"/><stop offset="1" stop-color="#e81566"/></linearGradient>
<linearGradient id="ln" x1="0" y1="0" x2="1" y2="0"><stop offset="0" stop-color="#c8372d"/><stop offset=".55" stop-color="#9c3a4a"/><stop offset="1" stop-color="#5b3a6e"/></linearGradient></defs>
<path d="M.9 22.6 C10 13 18 3 24 1.3 C28 .3 31 2.5 36.5 8.3 C32 7.2 28 8 23 10.5 C16 14.2 8 18.8 .9 22.6 Z" fill="url(#swb)"/>
<path d="M34.3 6 C40 2 46 1.2 51 1.3 C60 1.5 67 5 69.8 8.6 C67 14 60 18.6 52.6 18.4 C45 18.2 40 13 35.5 8.4 Z" fill="url(#swr)"/>
<text x="25.4" y="44.3" font-family="Liberation Sans, sans-serif" font-size="29.6" fill="#12417f" stroke="#12417f" stroke-width=".6" textLength="108.6" lengthAdjust="spacingAndGlyphs">aragen</text>
<rect x="0" y="50" width="586" height="2.7" fill="url(#ln)"/></svg>

</article>

<section>
<div class="abs card" style="left:1458px;top:90px;width:450px;height:838px"></div>
<svg style="left:1513.7px;top:102px" width="35" height="35" viewBox="0 0 35 35" ><path d="M17.5 1.8 L33.6 17.5 L17.5 33.2 L1.4 17.5 Z" fill="none" stroke="#f5bcba" stroke-width="2.6" stroke-linejoin="round"/><rect x="11.2" y="15" width="12.8" height="5" rx=".6" fill="#f5bcba"/></svg>
<svg style="left:1598.6px;top:101px" width="36" height="36" viewBox="0 0 36 36" ><defs><clipPath id="cpb4dbf7"><circle cx="17" cy="19" r="14.6"/></clipPath></defs><circle cx="17" cy="19" r="16.1" fill="none" stroke="#b4dbf7" stroke-width="2.1"/><g clip-path="url(#cpb4dbf7)"><ellipse cx="17" cy="16.8" rx="5.7" ry="6.3" fill="#a8d6f6"/><rect x="14.4" y="21" width="5.2" height="5" fill="#a8d6f6"/><path d="M6 29.4 Q7.6 25.6 13 24.7 L17 26 L21 24.7 Q26.4 25.6 28 29.4 Q22 35 17 35 Q12 35 6 29.4 Z" fill="#a8d6f6"/></g><circle cx="28.7" cy="6.6" r="5.2" fill="#fff" stroke="#b4dbf7" stroke-width="1.6"/><path d="M26.2 6.6 H31.2 M28.7 4.1 V9.1" stroke="#b4dbf7" stroke-width="1.5"/></svg>
<svg style="left:1681.5px;top:101px" width="36" height="36" viewBox="0 0 36 36" ><defs><clipPath id="cpf5bcba"><circle cx="17" cy="19" r="14.6"/></clipPath></defs><circle cx="17" cy="19" r="16.1" fill="none" stroke="#f5bcba" stroke-width="2.1"/><g clip-path="url(#cpf5bcba)"><ellipse cx="17" cy="16.8" rx="5.7" ry="6.3" fill="#f5bcba"/><rect x="14.4" y="21" width="5.2" height="5" fill="#f5bcba"/><path d="M6 29.4 Q7.6 25.6 13 24.7 L17 26 L21 24.7 Q26.4 25.6 28 29.4 Q22 35 17 35 Q12 35 6 29.4 Z" fill="#f5bcba"/></g><circle cx="28.7" cy="6.6" r="5.2" fill="#fff" stroke="#f5bcba" stroke-width="1.6"/><path d="M26.2 6.6 H31.2 M28.7 4.1 V9.1" stroke="#f5bcba" stroke-width="1.5"/></svg>
<div class="abs" style="left:1757px;top:102px;width:35px;height:35px;border-radius:50%;background:#50aeea"></div>
<svg style="left:1764px;top:110px" width="21" height="18" viewBox="0 0 21 18" ><path d="M2 9.6 L7.4 15 L19 2.6" fill="none" stroke="#fff" stroke-width="3.2"/></svg>
<div class="abs" style="left:1841px;top:102px;width:35px;height:35px;border-radius:50%;background:#f25b52"></div>
<svg style="left:1849px;top:109px" width="19" height="21" viewBox="0 0 19 21" ><path d="M6.4 0 H12.6 L13.6 1.6 H18 Q19 1.6 19 2.6 V4.4 H0 V2.6 Q0 1.6 1 1.6 H5.4 Z M1.6 6 H17.4 L16.2 19.2 Q16 21 14.2 21 H4.8 Q3 21 2.8 19.2 Z" fill="#fff"/></svg>
<div class="abs" style="left:1470px;top:148px;width:426px;height:50px;background:#f3f8fe"></div>
<div class="abs" style="left:1480px;top:161px;width:97px;height:24px;background:#f6f6f4"></div>
<h3 class="t" style="left:1480.0px;top:165.0px;font-size:17.2px;font-weight:700;color:#0b0b14;letter-spacing:0.287px;margin:0;">Result/s (1)</h3>
<svg style="left:1626.6px;top:158px" width="92.6" height="30" viewBox="0 0 92.6 30" ><path d="M0 0 H79.6 L92.6 15 L79.6 30 H0 L10.6 15 Z" fill="#2ec5e6"/></svg>
<span class="t" style="left:1664.6px;top:168.0px;font-size:12.6px;font-weight:700;color:#fff;letter-spacing:0.003px;">AI</span>
<div class="abs" style="left:1756px;top:159px;width:65px;height:27px;border-radius:5px;background:#4dacea"></div>
<svg style="left:1763.6px;top:166px" width="12" height="12" viewBox="0 0 12 12" ><path d="M5.2 1.8 H2 Q.8 1.8 .8 3 V10 Q.8 11.2 2 11.2 H9 Q10.2 11.2 10.2 10 V6.8" fill="none" stroke="#fff" stroke-width="1.6"/><path d="M4.4 5.8 L9.4 .8 L11.4 2.8 L6.4 7.8 L4 8.2 Z" fill="#fff"/></svg>
<span class="t" style="left:1778.8px;top:167.0px;font-size:10.8px;font-weight:700;color:#fff;letter-spacing:-0.225px;">Edit All</span>
<svg style="left:1871px;top:165px" width="15" height="15" viewBox="0 0 15 15" ><path d="M7.5 .8 V14.2 M.8 7.5 H14.2" stroke="#47a6ea" stroke-width="2.3" stroke-linecap="round"/></svg>
<span class="t" style="left:1470.0px;top:227.0px;font-size:12.6px;font-weight:700;letter-spacing:-0.367px;">CAS-No:</span><span class="t" style="left:1522.9px;top:227.0px;font-size:12.6px;letter-spacing:0.308px;">89717-68-0</span>
<span class="t" style="left:1470.0px;top:250.0px;font-size:12.6px;font-weight:700;letter-spacing:0.040px;">Name:</span><span class="t" style="left:1511.9px;top:250.0px;font-size:12.6px;letter-spacing:0.577px;">4-Bromo-5-methoxy-1-methyl-1H-pyrazole</span>
<span class="t" style="left:1470.0px;top:274.0px;font-size:12.6px;font-weight:700;letter-spacing:-0.223px;">Qnt:</span><span class="t" style="left:1498.7px;top:274.0px;font-size:12.6px;letter-spacing:-0.165px;">10g, 25g, 50g</span>
<div class="abs" style="left:1811px;top:223px;width:30px;height:30px;border-radius:4px;background:#ec7b78"></div>
<svg style="left:1818.5px;top:229px" width="15" height="18" viewBox="0 0 15 18" ><g fill="none" stroke="#fff" stroke-width="1.2"><path d="M.6 4 H14.4"/><path d="M4.6 3.8 V1.6 Q4.6 .8 5.4 .8 H9.6 Q10.4 .8 10.4 1.6 V3.8"/><path d="M2 4.2 L2.8 15.8 Q2.9 17.2 4.2 17.2 H10.8 Q12.1 17.2 12.2 15.8 L13 4.2"/><path d="M5.2 7 V14.4 M7.5 7 V14.4 M9.8 7 V14.4"/></g></svg>
<div class="abs" style="left:1862px;top:223px;width:30px;height:30px;border-radius:4px;background:#4dacea"></div>
<svg style="left:1868px;top:229px" width="19" height="18" viewBox="0 0 19 18" ><g fill="none" stroke="#fff" stroke-width="1.4" stroke-linejoin="round"><path d="M8 2.6 H3 Q1 2.6 1 4.6 V14.6 Q1 16.6 3 16.6 H13 Q15 16.6 15 14.6 V9.6"/><path d="M6.6 9.4 L14.6 1.4 Q15.6 .6 16.6 1.4 L17.4 2.2 Q18.2 3.2 17.4 4.2 L9.4 12.2 L5.8 13 Z"/></g></svg>
<div class="abs" style="left:1470px;top:306px;width:426px;height:1px;background:#dcdcdc"></div>
<svg style="left:1503px;top:338px" width="360" height="360" viewBox="0 0 360 360" ><g transform="translate(180.2 179.7)" fill="none" stroke="#f7e0e0">
<circle r="164" stroke-width="12.7"/>
<circle r="142.6" stroke-width="5.6" stroke-dasharray="5.6 17.98"/>
<circle r="123" stroke-width="11"/>
<g transform="rotate(-43)">
<rect x="-190" y="-34" width="380" height="66" fill="#fff" stroke="none"/>
<text x="0" y="22" text-anchor="middle" font-family="Liberation Sans, sans-serif" font-size="63" font-weight="700" fill="#f7e0e0" stroke="none" textLength="250" lengthAdjust="spacingAndGlyphs">VERIFIED</text>
<path d="M-133 -21 L-156 0 L-133 21" stroke-width="6.4"/><path d="M133 -21 L156 0 L133 21" stroke-width="6.4"/>
</g>
</g></svg>
</section>

</body>
</html>
